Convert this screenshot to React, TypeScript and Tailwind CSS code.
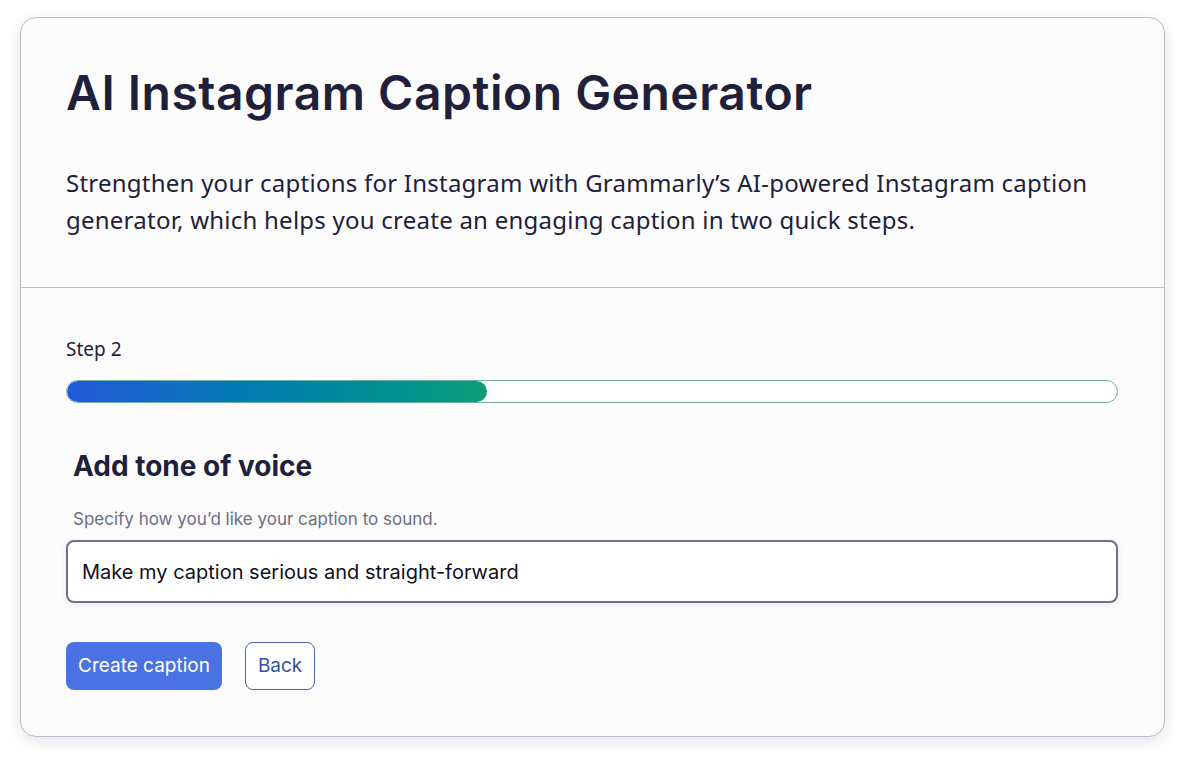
import React from "react";

export default function App() {
  return (
    <div className="w-[1200px] h-[763px] bg-white overflow-hidden" style={{ fontFamily: "Inter, 'Noto Sans', sans-serif" }}>
      <div className="ml-[20px] mt-[17px] w-[1145px] h-[720px] rounded-[16px] border border-[#b9bbc9] bg-[#fcfcfd] shadow-[0_4px_14px_rgba(30,33,57,0.12)] overflow-hidden">
        <div className="pl-[45px] pr-[45px] pt-[46px] h-[270px] border-b border-[#b9bbc9]">
          <h1 className="text-[48px] leading-[58px] font-semibold text-[#1e2139] tracking-[0.5px]">
            AI Instagram Caption Generator
          </h1>
          <p className="mt-[42px] text-[24px] leading-[37px] text-[#1e2139] tracking-[0.24px]" style={{ fontFamily: "'Noto Sans', sans-serif" }}>
            Strengthen your captions for Instagram with Grammarly’s AI-powered Instagram caption generator, which helps you create an engaging caption in two quick steps.
          </p>
        </div>
        <div className="pl-[45px] pr-[46px] pt-[49px]">
          <div className="text-[19px] leading-[24px] text-[#1e2139]" style={{ fontFamily: "'Noto Sans', sans-serif" }}>Step 2</div>
          <div className="mt-[19px] h-[23px] rounded-full border border-[#6fb0a4] bg-white overflow-hidden">
            <div className="h-full w-[40%] rounded-full bg-gradient-to-r from-[#2356d8] to-[#0f9e76]" />
          </div>
          <div className="pl-[7px] mt-[46px]">
            <h2 className="text-[28px] leading-[34px] font-bold text-[#1e2139]">Add tone of voice</h2>
            <div className="mt-[25px] text-[17px] leading-[22px] text-[#6b6e80]">Specify how you’d like your caption to sound.</div>
          </div>
          <div className="mt-[10px] h-[63px] rounded-[8px] border-2 border-[#6e7087] bg-white shadow-[0_2px_6px_rgba(30,33,57,0.08)] flex items-center pl-[14px] text-[20px] text-[#0f1020]">
            Make my caption serious and straight-forward
          </div>
          <div className="mt-[39px] flex gap-[23px]">
            <button className="h-[48px] px-[12px] rounded-[8px] bg-[#4a72e2] text-white text-[19px]">Create caption</button>
            <button className="h-[48px] px-[12px] rounded-[8px] border border-[#4d66ad] bg-white text-[#34509e] text-[19px]">Back</button>
          </div>
        </div>
      </div>
    </div>
  );
}
